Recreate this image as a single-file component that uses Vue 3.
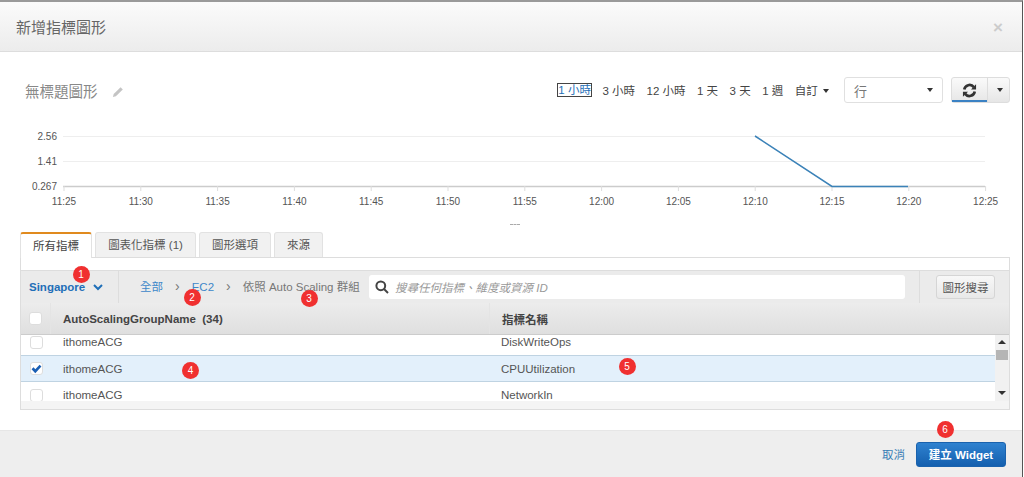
<script setup>
const ranges = ['3 小時', '12 小時', '1 天', '3 天', '1 週']
const tabs = [
  { label: '所有指標', width: 72 },
  { label: '圖表化指標 (1)', width: 101 },
  { label: '圖形選項', width: 72 },
  { label: '來源', width: 49 },
]
const rows = [
  { name: 'ithomeACG', metric: 'DiskWriteOps', selected: false },
  { name: 'ithomeACG', metric: 'CPUUtilization', selected: true },
  { name: 'ithomeACG', metric: 'NetworkIn', selected: false },
]
const xTicks = ['11:25', '11:30', '11:35', '11:40', '11:45', '11:50', '11:55', '12:00', '12:05', '12:10', '12:15', '12:20', '12:25']
const tickX = (i) => 64 + i * 76.8
const badges = [
  { n: 1, x: 81, y: 274 },
  { n: 2, x: 192, y: 297 },
  { n: 3, x: 309, y: 298 },
  { n: 4, x: 190.5, y: 370 },
  { n: 5, x: 627, y: 366 },
  { n: 6, x: 945, y: 429 },
]
</script>

<template>
  <div class="modal">
    <header class="modal-head">
      <span class="modal-title">新增指標圖形</span>
      <span class="close">×</span>
    </header>

    <main class="modal-body">
      <div class="title-row">
        <span class="graph-name">無標題圖形</span>
        <svg class="pencil" width="12" height="12" viewBox="0 0 12 12">
          <path d="M8.6 1.2l2.2 2.2-6.9 6.9-3 .8.8-3z" fill="#c4c4c4" />
        </svg>
        <div class="ranges">
          <span class="range range--active">1 小時</span>
          <span v-for="r in ranges" :key="r" class="range">{{ r }}</span>
          <span class="range">自訂 <i class="caret" /></span>
        </div>
        <div class="select">
          <span>行</span>
          <i class="caret" />
        </div>
        <div class="refresh">
          <div class="refresh-main">
            <svg width="15" height="15" viewBox="0 0 16 16" fill="none" stroke="#333" stroke-width="2.8">
              <path d="M2.4 7A5.7 5.7 0 0 1 12.6 4.4" />
              <path d="M13.6 9A5.7 5.7 0 0 1 3.4 11.6" />
              <path d="M15 1.4v5.4H9.6z" fill="#333" stroke="none" />
              <path d="M1 14.6V9.2h5.4z" fill="#333" stroke="none" />
            </svg>
          </div>
          <div class="refresh-more"><i class="caret" /></div>
        </div>
      </div>

      <svg class="chart" width="1022" height="100" viewBox="0 0 1022 100">
        <line x1="63" y1="21.5" x2="985" y2="21.5" stroke="#eee" />
        <line x1="63" y1="46.5" x2="985" y2="46.5" stroke="#eee" />
        <line x1="63" y1="71.5" x2="985" y2="71.5" stroke="#ccc" stroke-width="1.5" />
        <g fill="#555" font-size="10" text-anchor="end">
          <text x="57" y="25">2.56</text>
          <text x="57" y="50">1.41</text>
          <text x="57" y="75">0.267</text>
        </g>
        <g v-for="(t, i) in xTicks" :key="t">
          <line :x1="tickX(i)" y1="71" :x2="tickX(i)" y2="76" stroke="#ddd" />
          <text :x="tickX(i)" y="90" fill="#555" font-size="10" text-anchor="middle">{{ t }}</text>
        </g>
        <polyline points="755,21 832,71.5 908,71.5" fill="none" stroke="#3b82b8" stroke-width="1.5" />
      </svg>

      <div class="handle" />

      <nav class="tabs">
        <span
          v-for="(t, i) in tabs"
          :key="t.label"
          class="tab"
          :class="{ 'tab--active': i === 0 }"
          :style="{ width: t.width + 'px' }"
        >{{ t.label }}</span>
      </nav>

      <section class="panel">
        <div class="toolbar">
          <div class="region">
            <span>Singapore</span>
            <svg width="10" height="7" viewBox="0 0 10 7" fill="none" stroke="#1f6fb8" stroke-width="2">
              <path d="M1 1l4 4 4-4" />
            </svg>
          </div>
          <div class="crumbs">
            <a>全部</a><span class="sep">›</span><a>EC2</a><span class="sep">›</span><span>依照 Auto Scaling 群組</span>
          </div>
          <div class="search">
            <svg width="14" height="14" viewBox="0 0 14 14" fill="none" stroke="#444" stroke-width="2">
              <circle cx="5.8" cy="5.8" r="4.4" />
              <path d="M9 9l4 4" />
            </svg>
            <span>搜尋任何指標、維度或資源 ID</span>
          </div>
          <div class="graph-search">
            <button type="button">圖形搜尋</button>
          </div>
        </div>

        <div class="thead">
          <div class="cell-check"><i class="box" /></div>
          <div class="col-name">AutoScalingGroupName&nbsp; (34)</div>
          <div class="col-metric">指標名稱</div>
        </div>

        <div class="tbody">
          <div class="rows">
            <div v-for="(r, i) in rows" :key="i" class="row" :class="{ 'row--selected': r.selected }">
              <div class="cell-check">
                <i class="box">
                  <svg v-if="r.selected" width="12" height="10" viewBox="0 0 12 10">
                    <path d="M.6 5.2l2.2-2 1.9 2L9.4.4l2 1.9-6.7 7.3z" fill="#1a5fb4" />
                  </svg>
                </i>
              </div>
              <div class="col-name">{{ r.name }}</div>
              <div class="col-metric">{{ r.metric }}</div>
            </div>
          </div>
          <div class="scrollbar">
            <i class="arrow arrow--up" />
            <i class="thumb" />
            <i class="arrow arrow--down" />
          </div>
        </div>
        <div class="panel-foot" />
      </section>
    </main>

    <footer class="modal-foot">
      <a class="cancel">取消</a>
      <button class="create" type="button">建立 Widget</button>
    </footer>

    <span
      v-for="b in badges"
      :key="b.n"
      class="badge"
      :style="{ left: b.x - 8.5 + 'px', top: b.y - 8.5 + 'px' }"
    >{{ b.n }}</span>
  </div>
</template>

<style>
html, body { background: #fff; overflow: hidden; }
</style>

<style scoped>
.modal {
  position: relative;
  width: 1022px;
  height: 475px;
  border-top: 2px solid #9a9a9a;
  border-right: 1px solid #555;
  display: flex;
  flex-direction: column;
  background: #fff;
  color: #555;
  font-family: "Liberation Sans", "Noto Sans CJK TC", sans-serif;
  font-size: 13px;
}

.modal-head {
  height: 49px;
  flex: none;
  display: flex;
  align-items: center;
  justify-content: space-between;
  padding: 0 19px 0 16px;
  background: linear-gradient(#fbfbfb, #ececec);
  border-bottom: 1px solid #ddd;
}

.modal-title { font-size: 15px; color: #666; }

.close { font-size: 17px; font-weight: 700; color: #ccc; margin-top: 2px; }

.modal-body { flex: 1; min-height: 0; }

.title-row {
  display: flex;
  align-items: center;
  height: 26px;
  margin-top: 25px;
  padding-left: 25px;
  padding-right: 12px;
}

.graph-name { font-size: 14.5px; color: #888; margin-top: 1px; }

.pencil { margin-left: 14px; margin-top: 3px; }

.ranges {
  margin-left: auto;
  display: flex;
  align-items: center;
  gap: 11.5px;
  font-size: 11.5px;
  color: #444;
  margin-top: -1px;
}

.range { white-space: nowrap; }

.range--active {
  color: #1f6fb8;
  line-height: 12px;
  outline: 1.5px solid #444;
}

.caret {
  display: inline-block;
  width: 0;
  height: 0;
  border-left: 3.5px solid transparent;
  border-right: 3.5px solid transparent;
  border-top: 4px solid #333;
  vertical-align: 2px;
  margin-left: 2px;
}

.select {
  width: 99px;
  height: 26px;
  box-sizing: border-box;
  margin-left: 15px;
  padding: 0 9px;
  display: flex;
  align-items: center;
  justify-content: space-between;
  border: 1px solid #e0e0e0;
  border-radius: 3px;
  color: #777;
}

.refresh {
  display: flex;
  height: 24px;
  margin-left: 8px;
  border: 1px solid #ddd;
  border-radius: 3px;
  background: linear-gradient(#fafafa, #e6e6e6);
}

.refresh-main {
  width: 35px;
  display: flex;
  align-items: center;
  justify-content: center;
  border-right: 1px solid #ddd;
  box-shadow: inset 0 -2px 0 #3b82c4;
}

.refresh-more {
  width: 21px;
  display: flex;
  align-items: center;
  justify-content: center;
}

.chart { display: block; margin-top: 12px; font-family: "Liberation Sans", sans-serif; }

.handle {
  width: 10px;
  height: 0;
  margin: 9px 0 0 510px;
  border-top: 1px dashed #aaa;
}

.tabs {
  display: flex;
  gap: 3px;
  margin: 7px 0 0 20px;
  height: 25px;
}

.tab {
  box-sizing: border-box;
  height: 25px;
  line-height: 24px;
  text-align: center;
  font-size: 11.5px;
  color: #555;
  background: #f1f1f1;
  border: 1px solid #e2e2e2;
  border-bottom: none;
  border-radius: 3px 3px 0 0;
}

.tab--active {
  position: relative;
  z-index: 1;
  height: 26px;
  background: #fff;
  border-top: 2px solid #e08a1e;
  color: #444;
}

.panel {
  margin-left: 20px;
  width: 990px;
  height: 153px;
  box-sizing: border-box;
  padding-top: 12px;
  border: 1px solid #ddd;
  display: flex;
  flex-direction: column;
}

.toolbar {
  flex: none;
  height: 33px;
  display: flex;
  align-items: center;
  background: #ebebeb;
  border-top: 1px solid #ddd;
  box-sizing: border-box;
}

.region {
  width: 98px;
  box-sizing: border-box;
  align-self: stretch;
  display: flex;
  align-items: center;
  gap: 8px;
  padding-left: 8px;
  border-right: 1px solid #ddd;
  color: #1f6fb8;
  font-weight: 700;
  font-size: 11.5px;
}

.crumbs {
  margin-left: 21px;
  width: 229px;
  flex: none;
  font-size: 11.5px;
  line-height: 16px;
  color: #777;
  white-space: nowrap;
}

.crumbs a { color: #3d87c9; }

.sep { margin: 0 12px; font-size: 14px; line-height: 1; color: #777; }

.search {
  width: 536px;
  height: 24px;
  flex: none;
  box-sizing: border-box;
  display: flex;
  align-items: center;
  gap: 6px;
  padding-left: 6px;
  background: #fff;
  border-radius: 3px;
  color: #999;
  font-style: italic;
  font-size: 11.5px;
}

.graph-search {
  flex: 1;
  align-self: stretch;
  margin-left: 14px;
  padding-left: 16px;
  display: flex;
  align-items: center;
  border-left: 1px solid #ddd;
}

.graph-search button {
  width: 59px;
  height: 24px;
  padding: 0;
  border: 1px solid #d5d5d5;
  border-radius: 3px;
  background: linear-gradient(#f8f8f8, #e8e8e8);
  color: #555;
  font: inherit;
  font-size: 11.5px;
}

.thead {
  flex: none;
  height: 32px;
  display: flex;
  align-items: center;
  background: linear-gradient(#ececec, #dfdfdf);
  border-bottom: 1px solid #ccc;
  box-sizing: border-box;
  font-weight: 700;
  font-size: 11.5px;
  color: #444;
}

.cell-check {
  width: 30px;
  flex: none;
  box-sizing: border-box;
  align-self: stretch;
  display: flex;
  align-items: center;
  justify-content: center;
  border-right: 1px solid #e4e4e4;
}

.box {
  width: 13px;
  height: 13px;
  box-sizing: border-box;
  display: flex;
  align-items: center;
  justify-content: center;
  background: #fff;
  border: 1px solid #ddd;
  border-radius: 3px;
}

.col-name {
  width: 438px;
  flex: none;
  padding-left: 12px;
  box-sizing: border-box;
  align-self: stretch;
  display: flex;
  align-items: center;
}

.col-metric {
  flex: 1;
  padding-left: 12px;
  align-self: stretch;
  display: flex;
  align-items: center;
  border-left: 1px solid #e4e4e4;
}

.tbody {
  flex: none;
  height: 66px;
  display: flex;
  overflow: hidden;
}

/* list is scrolled a few pixels, so the first row starts above the header edge */
.rows { flex: 1; overflow: hidden; }
.rows > .row:first-child { margin-top: -6px; }

.row {
  height: 26px;
  display: flex;
  align-items: center;
  font-size: 11.5px;
  color: #555;
  box-sizing: border-box;
}

.row .cell-check, .row .col-metric { border: none; }

.row--selected {
  height: 27px;
  background: #e3f0fb;
  border-top: 1px solid #bfd3e2;
  border-bottom: 1px solid #bfd3e2;
}

.scrollbar {
  width: 14px;
  flex: none;
  position: relative;
  background: #f1f1f1;
}

.arrow {
  position: absolute;
  left: 3px;
  width: 0;
  height: 0;
  border-left: 4px solid transparent;
  border-right: 4px solid transparent;
}

.arrow--up { top: 5px; border-bottom: 4px solid #333; }
.arrow--down { bottom: 6px; border-top: 4px solid #333; }

.thumb {
  position: absolute;
  top: 15px;
  left: 1px;
  width: 12px;
  height: 10px;
  background: #b5b5b5;
}

.panel-foot {
  flex: 1;
  background: #f4f4f4;
}

.modal-foot {
  height: 47px;
  margin-top: auto;
  flex: none;
  display: flex;
  align-items: center;
  justify-content: flex-end;
  gap: 11px;
  padding-right: 16px;
  background: #eee;
  border-top: 1px solid #e6e6e6;
  box-sizing: border-box;
}

.cancel { color: #3a7db5; font-size: 11.5px; }

.create {
  width: 90px;
  height: 25px;
  padding: 0;
  border: 1px solid #1a62ad;
  border-radius: 3px;
  background: linear-gradient(#2f82d0, #145fae);
  color: #fff;
  font: inherit;
  font-weight: 700;
  font-size: 11.5px;
}

.badge {
  position: absolute;
  margin-top: -2px;
  width: 17px;
  height: 17px;
  border-radius: 50%;
  background: #f03030;
  color: #fff;
  font-size: 10px;
  line-height: 17px;
  text-align: center;
}
</style>
